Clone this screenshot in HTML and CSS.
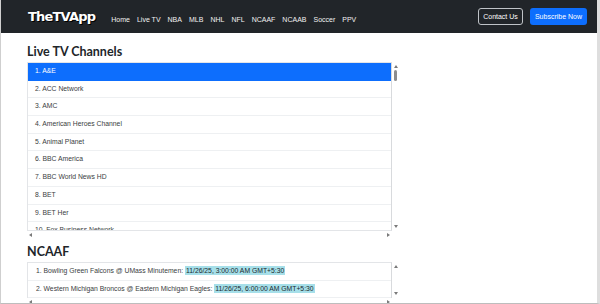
FILE: index.html
```html
<!DOCTYPE html>
<html lang="en">
<head>
    <meta charset="UTF-8">
    <meta name="viewport" content="width=device-width, initial-scale=1.0">
    <title>TheTVApp</title>
    <link rel="stylesheet" href="styles.css">
</head>
<body>
    <div class="frame">
        <nav class="navbar">
            <a class="brand" href="#">TheTVApp</a>
            <ul class="nav-links">
                <li><a href="#">Home</a></li>
                <li><a href="#">Live TV</a></li>
                <li><a href="#">NBA</a></li>
                <li><a href="#">MLB</a></li>
                <li><a href="#">NHL</a></li>
                <li><a href="#">NFL</a></li>
                <li><a href="#">NCAAF</a></li>
                <li><a href="#">NCAAB</a></li>
                <li><a href="#">Soccer</a></li>
                <li><a href="#">PPV</a></li>
            </ul>
            <div class="nav-actions">
                <a class="btn btn-outline" href="#">Contact Us</a>
                <a class="btn btn-primary" href="#">Subscribe Now</a>
            </div>
        </nav>

        <main class="content">
            <section>
                <h2>Live TV Channels</h2>
                <div class="scroll-box channels">
                    <div class="scroll-main">
                        <ul class="list">
                            <li class="active">1. A&amp;E</li>
                            <li>2. ACC Network</li>
                            <li>3. AMC</li>
                            <li>4. American Heroes Channel</li>
                            <li>5. Animal Planet</li>
                            <li>6. BBC America</li>
                            <li>7. BBC World News HD</li>
                            <li>8. BET</li>
                            <li>9. BET Her</li>
                            <li>10. Fox Business Network</li>
                        </ul>
                        <div class="vbar">
                            <span class="arrow up"></span>
                            <span class="thumb"></span>
                            <span class="arrow down"></span>
                        </div>
                    </div>
                    <div class="hbar">
                        <span class="arrow left"></span>
                        <span class="arrow right"></span>
                    </div>
                </div>
            </section>

            <section>
                <h2>NCAAF</h2>
                <div class="scroll-box games">
                    <div class="scroll-main">
                        <ul class="list">
                            <li>1. Bowling Green Falcons @ UMass Minutemen: <mark>11/26/25, 3:00:00 AM GMT+5:30</mark></li>
                            <li>2. Western Michigan Broncos @ Eastern Michigan Eagles: <mark>11/26/25, 6:00:00 AM GMT+5:30</mark></li>
                        </ul>
                        <div class="vbar">
                            <span class="arrow up"></span>
                            <span class="arrow down"></span>
                        </div>
                    </div>
                    <div class="hbar">
                        <span class="arrow left"></span>
                        <span class="arrow right"></span>
                    </div>
                </div>
            </section>
        </main>
    </div>
</body>
</html>
```

FILE: styles.css
```css
* {
    box-sizing: border-box;
}

body {
    margin: 0;
    padding: 0;
    font-family: 'Liberation Sans', Arial, sans-serif;
    background: #fff;
}

.frame {
    width: 600px;
    height: 304px;
    overflow: hidden;
    border-left: 1px solid #cfcfcf;
    border-right: 3px solid #dedede;
    border-bottom: 1px solid #bdbdbd;
    background: #fff;
}

/* navbar */
.navbar {
    height: 33px;
    background: #212529;
    display: flex;
    align-items: center;
    padding: 0 10px 0 27px;
}

.brand {
    color: #fff;
    text-decoration: none;
    font-family: 'DejaVu Sans', sans-serif;
    font-weight: bold;
    font-size: 13px;
    letter-spacing: -0.8px;
    text-shadow: 1px 1px 0 #000;
    margin-right: 16px;
}

.nav-links {
    list-style: none;
    display: flex;
    gap: 7px;
    margin: 0;
    padding: 0;
}

.nav-links a {
    color: #f1f1f1;
    text-decoration: none;
    font-size: 7px;
}

.nav-actions {
    margin-left: auto;
    display: flex;
    gap: 7px;
}

.btn {
    display: inline-flex;
    align-items: center;
    justify-content: center;
    height: 17px;
    font-size: 7px;
    color: #fff;
    text-decoration: none;
    border-radius: 3px;
}

.btn-outline {
    width: 45px;
    border: 1px solid #bfc3c7;
}

.btn-primary {
    width: 57px;
    background: #0d6efd;
}

/* content */
.content {
    padding: 10px 0 0 26px;
}

h2 {
    margin: 0 0 2px;
    font-family: Lato, 'Open Sans', sans-serif;
    font-weight: bold;
    font-size: 12.5px;
    line-height: 17px;
    color: #212529;
}

.scroll-box {
    width: 372px;
    margin-bottom: 5px;
}

.scroll-main {
    display: flex;
}

.list {
    list-style: none;
    margin: 0;
    padding: 0;
    flex: 1;
    overflow: hidden;
    border: 1px solid #e3e5e8;
    border-right-color: #d8dadd;
}

.channels .scroll-main {
    height: 169px;
}

.list li {
    height: 17.7px;
    line-height: 16.7px;
    padding: 0 7px;
    font-size: 6.8px;
    color: #3a3d41;
    border-bottom: 1px solid #eef0f2;
    white-space: nowrap;
}

.list li.active {
    background: #0d6efd;
    color: #fff;
    border-color: #0d6efd;
}

.games .list li {
    padding-left: 8px;
}

mark {
    background: #a6dfe9;
    color: #1c2a2e;
    padding: 1px 1px;
}

/* fake scrollbars */
.vbar {
    width: 7px;
    display: flex;
    flex-direction: column;
    align-items: center;
    background: #fff;
}

.vbar .up {
    margin-top: 3px;
}

.vbar .down {
    margin-top: auto;
    margin-bottom: 3px;
}

.thumb {
    width: 3px;
    height: 11px;
    margin-top: 2px;
    border-radius: 2px;
    background: #8d8d8d;
}

.hbar {
    height: 7px;
    display: flex;
    align-items: center;
    justify-content: space-between;
    padding: 0 9px 0 2px;
}

.arrow {
    width: 0;
    height: 0;
    border: 2px solid transparent;
}

.arrow.up {
    border-bottom: 3px solid #7a7a7a;
    border-top-width: 0;
}

.arrow.down {
    border-top: 3px solid #7a7a7a;
    border-bottom-width: 0;
}

.arrow.left {
    border-right: 3px solid #7a7a7a;
    border-left-width: 0;
}

.arrow.right {
    border-left: 3px solid #7a7a7a;
    border-right-width: 0;
}

.games .scroll-main {
    height: 36px;
}

.games .list {
    border-bottom: none;
}
```
